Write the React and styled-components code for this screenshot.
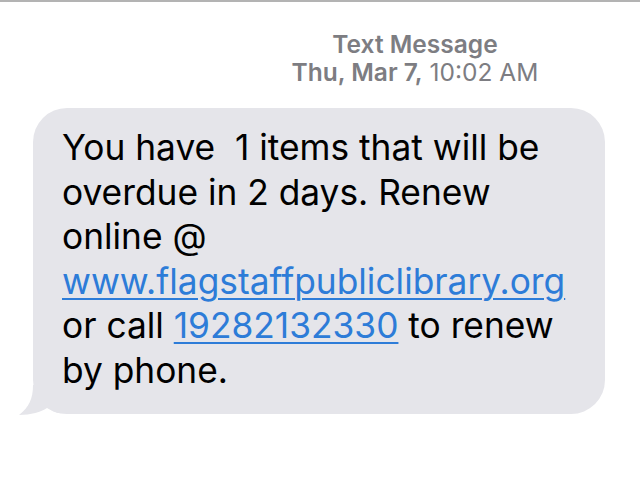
import React from 'react';
import styled, {createGlobalStyle} from "styled-components";

const Global = createGlobalStyle`
  html, body {
    margin: 0;
    padding: 0;
    background: #ffffff;
  }
  body {
    font-family: Inter, "Liberation Sans", Arial, sans-serif;
  }
`

const Screen = styled.div`
  width: 640px;
  height: 479px;
  overflow: hidden;
  background: #fff;
  border-top: 2px solid #b3b3b3;
  box-sizing: border-box;
`

const Header = styled.div`
  display: flex;
  flex-direction: column;
  align-items: center;
  padding: 28px 0 0 190px;
  color: #7d7d82;
  font-size: 24.5px;
  line-height: 28px;
`

const Bold = styled.span`
  font-weight: 600;
`

const Thread = styled.div`
  padding: 22px 35px 0 33px;
`

const Bubble = styled.div`
  position: relative;
  background: #e5e5ea;
  border-radius: 34px;
  padding: 18px 20px 21px 29px;
  font-size: 35.3px;
  line-height: 44.5px;
  color: #000;
  white-space: pre;
`

const Link = styled.span`
  color: #2d7cd8;
  text-decoration: underline;
  text-decoration-thickness: 2px;
  text-underline-offset: 4px;
`

const Tail = styled.svg`
  position: absolute;
  left: -14px;
  bottom: -1px;
`

export default function App() {
  return (
    <>
      <Global/>
      <Screen>
        <Header>
          <Bold>Text Message</Bold>
          <span><Bold>Thu, Mar 7,</Bold> 10:02 AM</span>
        </Header>
        <Thread>
          <Bubble>
            {"You have  1 items that will be"}<br/>
            {"overdue in 2 days. Renew"}<br/>
            {"online @"}<br/>
            <Link>www.flagstaffpubliclibrary.org</Link><br/>
            {"or call "}<Link>19282132330</Link>{" to renew"}<br/>
            {"by phone."}
            <Tail width="40" height="30" viewBox="0 0 40 30">
              <path d="M14 0 C14 14 10 22 0 30 C12 30 22 27 28 23 C33 26 38 28 40 28 L40 0 Z" fill="#e5e5ea"/>
            </Tail>
          </Bubble>
        </Thread>
      </Screen>
    </>
  );
}
